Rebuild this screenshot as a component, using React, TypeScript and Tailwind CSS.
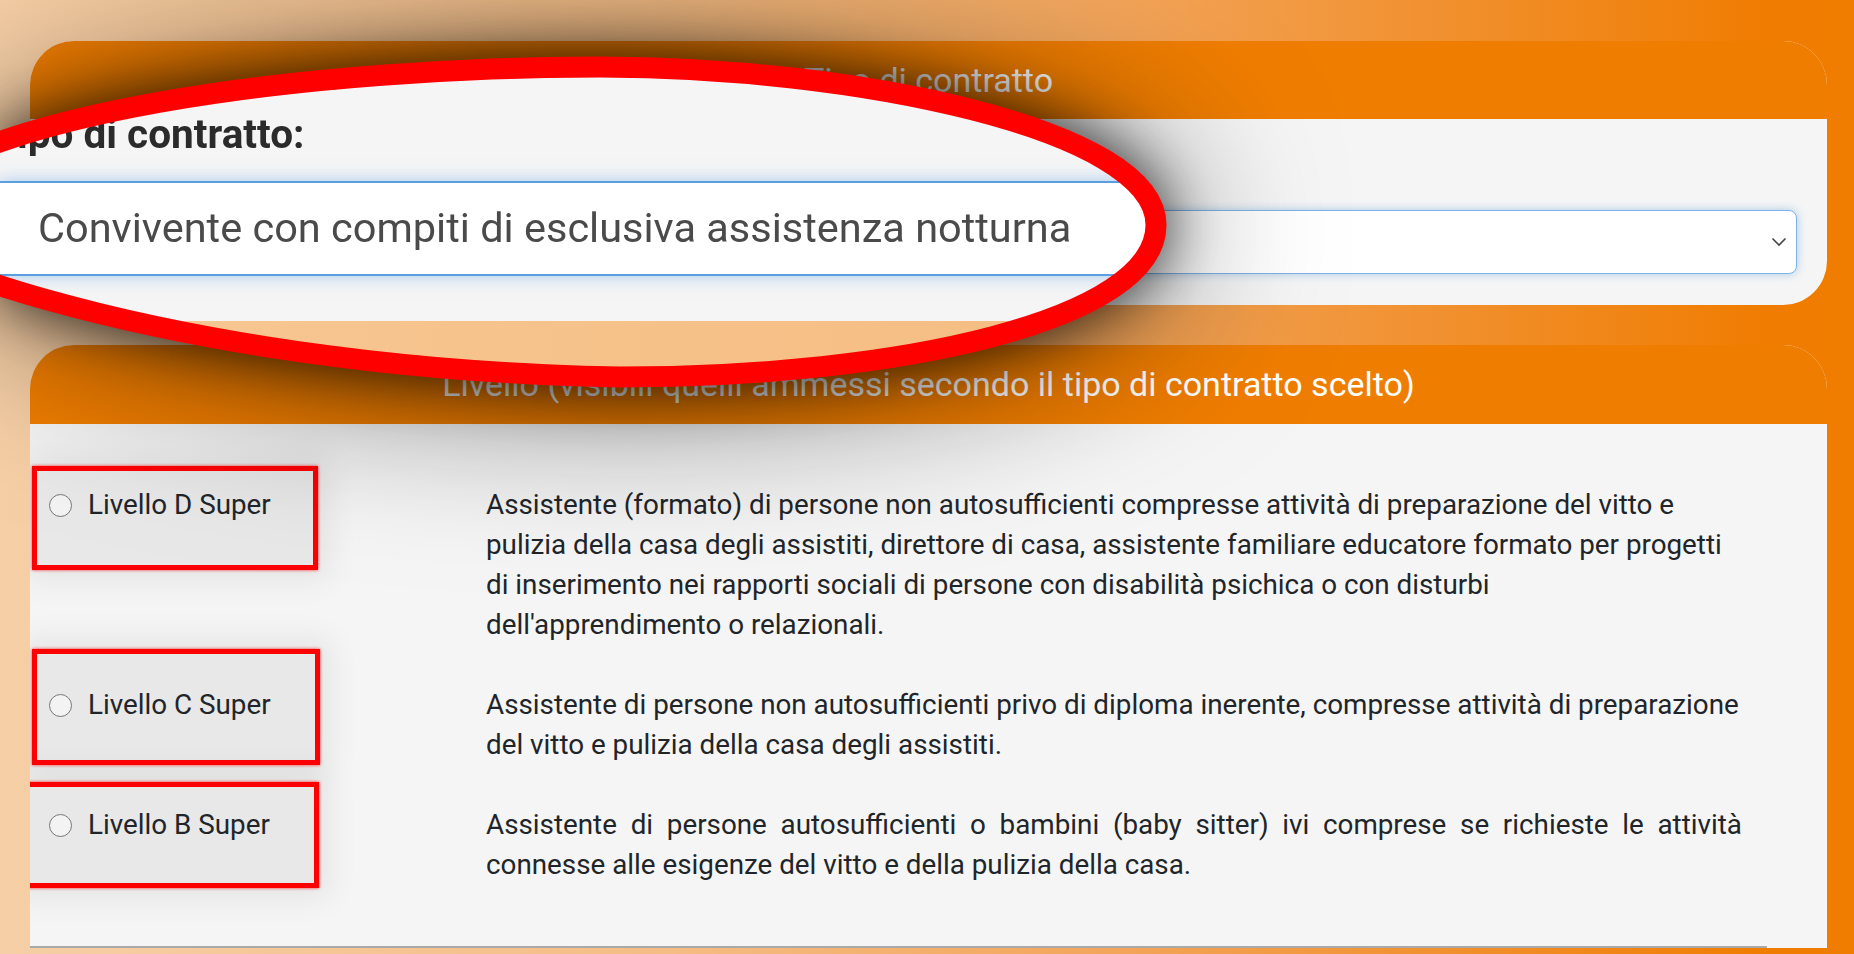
import React from "react";

const rows = [
  {
    label: "Livello D Super",
    desc: (
      <>
        Assistente (formato) di persone non autosufficienti compresse attività di preparazione del vitto e pulizia della casa degli assistiti, direttore di casa, assistente familiare educatore formato per progetti di inserimento nei rapporti sociali di persone con disabilità psichica o con disturbi
        <br />
        dell'apprendimento o relazionali.
      </>
    ),
    justify: false,
    rect: "left-[-17px] top-[-19px] w-[286px] h-[104px]",
  },
  {
    label: "Livello C Super",
    desc: "Assistente di persone non autosufficienti privo di diploma inerente, compresse attività di preparazione del vitto e pulizia della casa degli assistiti.",
    justify: false,
    rect: "left-[-17px] top-[-36px] w-[288px] h-[116px]",
  },
  {
    label: "Livello B Super",
    desc: "Assistente di persone autosufficienti o bambini (baby sitter) ivi comprese se richieste le attività connesse alle esigenze del vitto e della pulizia della casa.",
    justify: true,
    rect: "left-[-25px] top-[-23px] w-[295px] h-[106px]",
  },
];

const BUBBLE =
  "M1156,225C1156,128,850,67,600,67C330,67,-60,108,-130,225C-100,265,200,370,620,377C900,377,1156,320,1156,225Z";

export default function App() {
  return (
    <div className="relative w-[1854px] h-[954px] overflow-hidden bg-[linear-gradient(90deg,#f6cfa6_0%,#f5bd85_35%,#f3a55a_60%,#f1902e_78%,#f07d02_95%,#f07c00_100%)] font-['Roboto',sans-serif]">
      <div className="pt-[41px] pl-[30px] pr-[27px] flex flex-col gap-[40px]">
        {/* Card 1 */}
        <div className="rounded-[44px] overflow-hidden bg-[#f5f5f5]">
          <div className="h-[78px] bg-[#ef7d00] flex items-center justify-center text-white text-[34px]">
            Tipo di contratto
          </div>
          <div className="h-[186px] px-[30px] pt-[20px]">
            <div className="h-[36px] text-[24px] font-bold text-[#212529] leading-[36px]">
              Tipo di contratto:
            </div>
            <div className="mt-[35px] h-[64px] rounded-[8px] bg-white border-[1.5px] border-[#7fb2e5] shadow-[0_0_10px_rgba(80,150,220,0.45)] flex items-center justify-between pl-[18px] pr-[9px] text-[28px] text-[#495057]">
              <span>Convivente con compiti di esclusiva assistenza notturna</span>
              <svg width="16" height="10" viewBox="0 0 16 10">
                <polyline points="1.5,1.5 8,8 14.5,1.5" fill="none" stroke="#444" strokeWidth="1.6" />
              </svg>
            </div>
          </div>
        </div>

        {/* Card 2 */}
        <div className="rounded-t-[44px] overflow-hidden bg-[#f5f5f5]">
          <div className="h-[79px] bg-[#ef7d00] flex items-center justify-center text-white text-[34px]">
            Livello (visibili quelli ammessi secondo il tipo di contratto scelto)
          </div>
          <div className="pt-[61px]">
            <div className="grid grid-cols-[437px_1256px] gap-y-[40px] pl-[19px] text-[27.8px] leading-[40px] text-[#212529]">
              {rows.map((r) => (
                <React.Fragment key={r.label}>
                  <div className="relative">
                    <div
                      className={`absolute ${r.rect} border-[5px] border-[#ff0000] bg-[#e8e8e8] shadow-[0_0_3px_rgba(255,0,0,0.8),0_0_30px_10px_rgba(0,0,0,0.07)]`}
                    />
                    <div className="relative flex items-center h-[40px] gap-[16px]">
                      <span className="w-[23px] h-[23px] rounded-full border-[1.5px] border-[#767676] bg-[#f3f3f3]" />
                      <span>{r.label}</span>
                    </div>
                  </div>
                  <div className={r.justify ? "text-justify" : ""}>{r.desc}</div>
                </React.Fragment>
              ))}
            </div>
            <div className="mt-[61px] mr-[60px] h-[2px] bg-[#a9a9a9]" />
          </div>
        </div>
      </div>

      {/* Magnifier bubble */}
      <div className="absolute inset-0 pointer-events-none [filter:drop-shadow(0_0_28px_rgba(0,0,0,0.68))_drop-shadow(0_6px_80px_rgba(0,0,0,0.55))]">
        <div className="absolute inset-0 flex flex-col [clip-path:path('M1156,225C1156,128,850,67,600,67C330,67,-60,108,-130,225C-100,265,200,370,620,377C900,377,1156,320,1156,225Z')]">
          <div className="h-[321px] bg-[#f5f5f5] flex flex-col">
            <div className="pt-[110px] ml-[-8px] text-[40.5px] font-bold leading-[48px] text-[#2b2b2b] whitespace-nowrap">
              Tipo di contratto:
            </div>
            <div className="mt-[23px] h-[95px] bg-white border-y-2 border-[#5b9fe0] shadow-[0_0_16px_rgba(90,160,230,0.5)] flex items-center pl-[38px] text-[41.5px] text-[#4a4a4a] whitespace-nowrap">
              Convivente con compiti di esclusiva assistenza notturna
            </div>
          </div>
          <div className="flex-1 bg-[linear-gradient(90deg,#f7c895,#f4b574)]" />
        </div>
        <svg className="absolute inset-0" width="1854" height="954" viewBox="0 0 1854 954">
          <path d={BUBBLE} fill="none" stroke="#ff0000" strokeWidth="21" />
        </svg>
      </div>
    </div>
  );
}
